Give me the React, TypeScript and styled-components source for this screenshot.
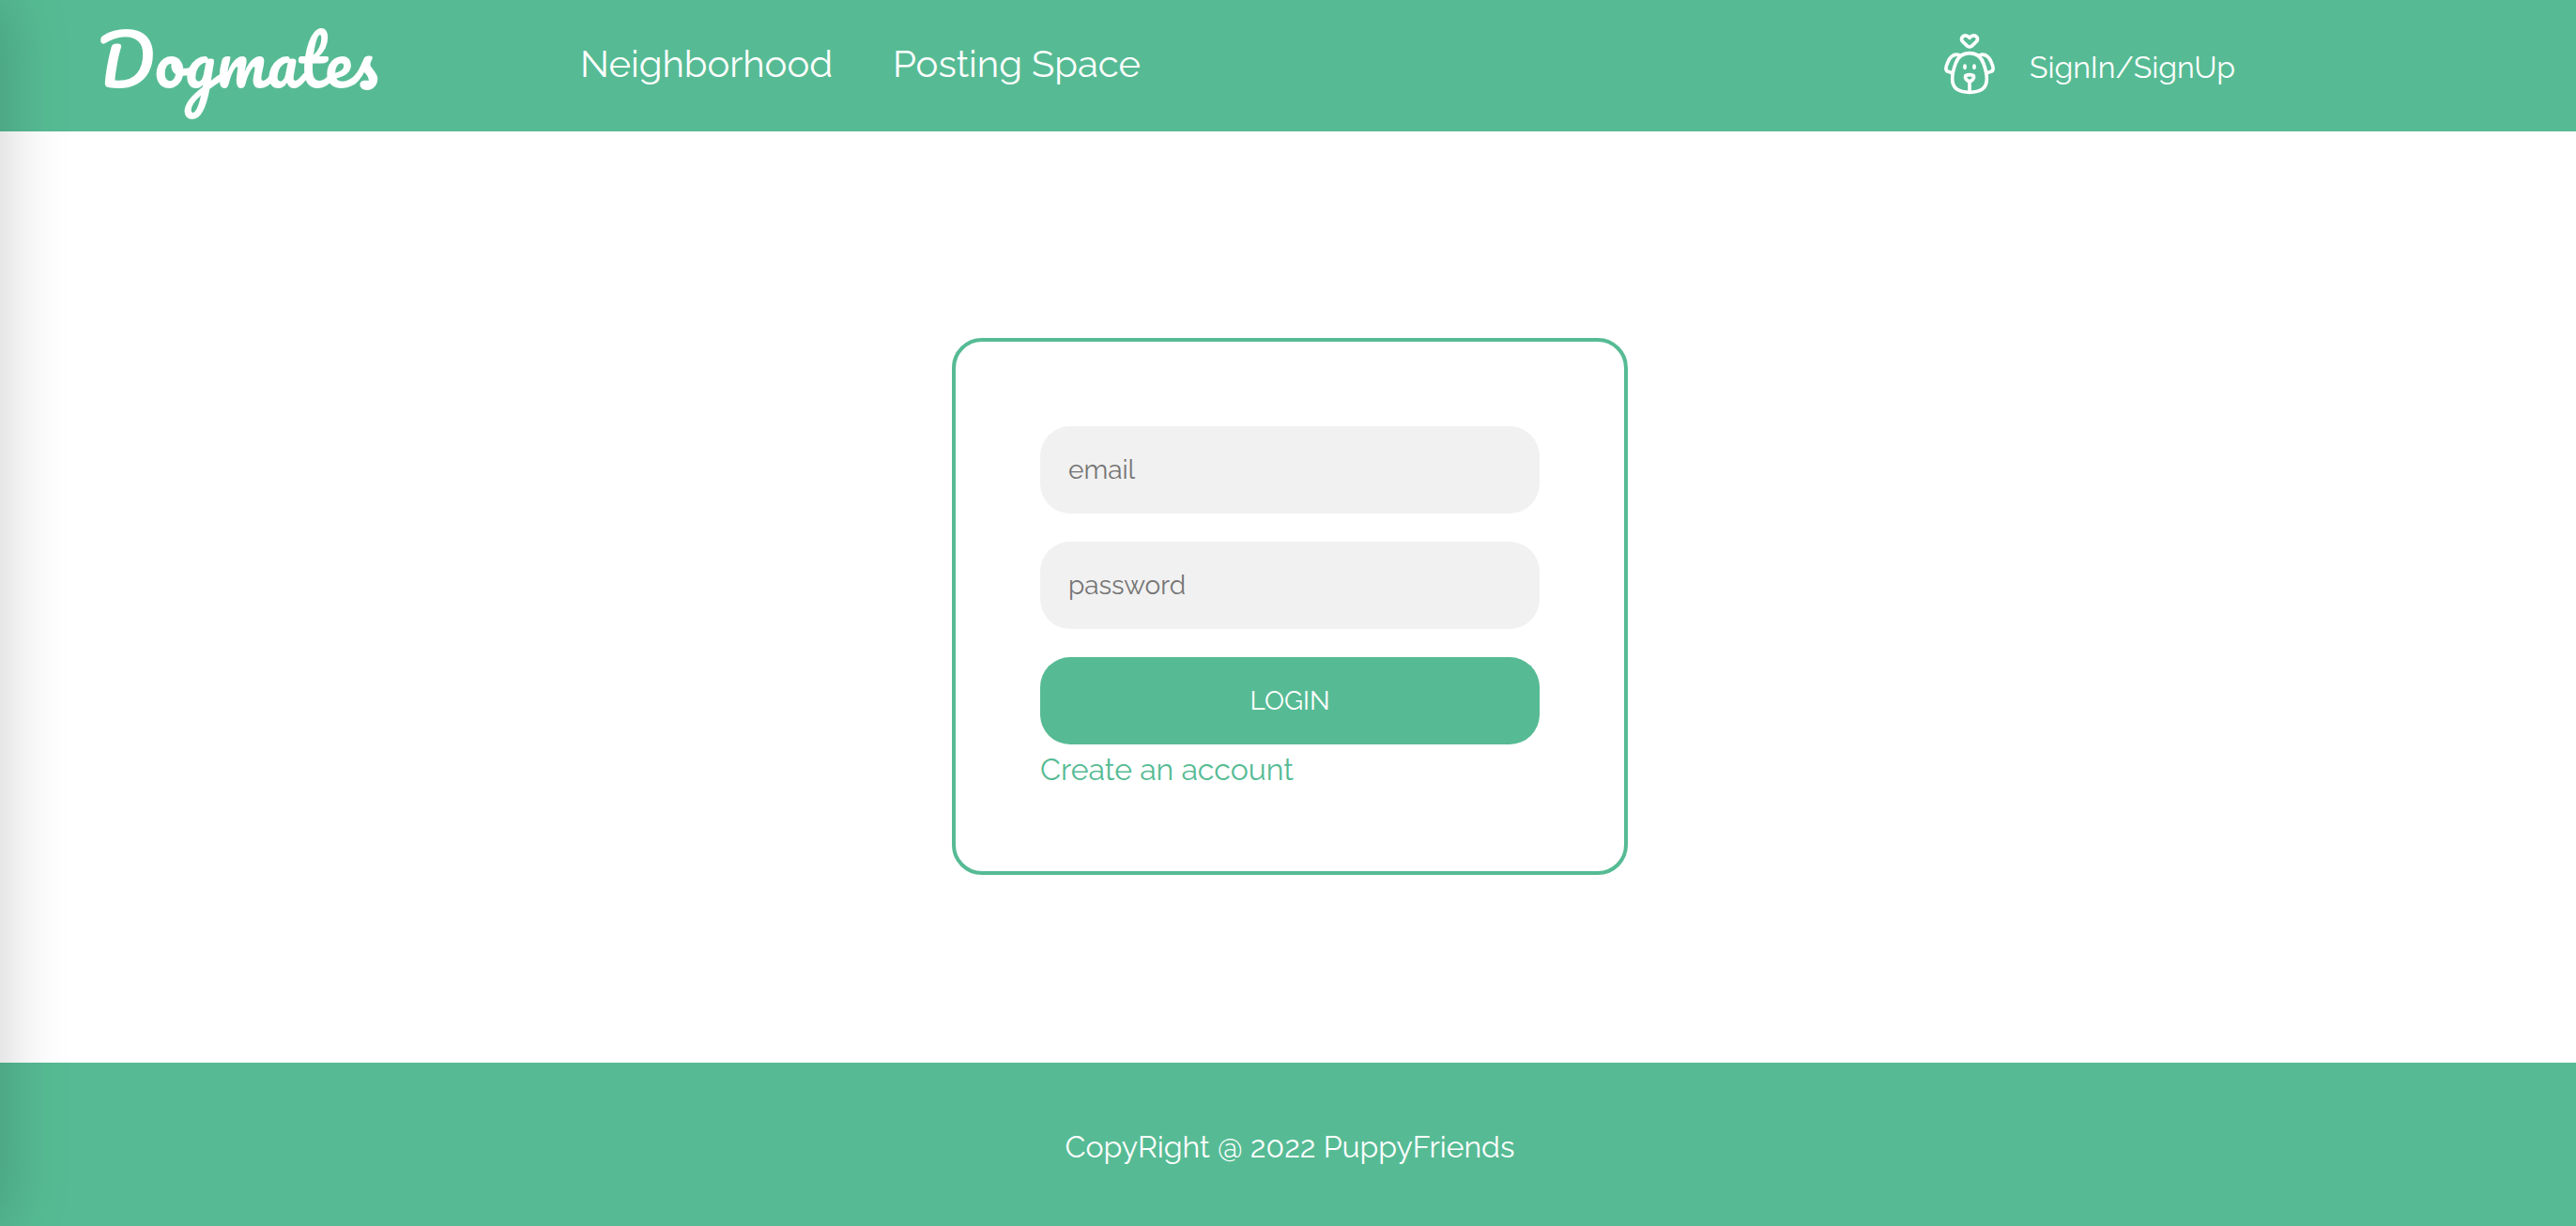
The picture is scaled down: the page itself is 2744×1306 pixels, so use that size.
import React from "react";
import styled, { createGlobalStyle } from "styled-components";

const green = "#56bb94";

const GlobalStyle = createGlobalStyle`
  * { box-sizing: border-box; }
  body {
    margin: 0;
    background: #fff;
    font-family: Raleway, Lato, "Liberation Sans", sans-serif;
    font-size: 32px;
    line-height: 44px;
  }
`;

const Page = styled.div`
  display: flex;
  flex-direction: column;
  min-height: 100vh;
`;

const Drawer = styled.aside`
  position: fixed;
  top: 0;
  right: 100%;
  width: 400px;
  height: 100%;
  box-shadow: 0 0 70px rgba(0, 0, 0, 0.2);
`;

const Header = styled.header`
  display: grid;
  grid-template-columns: 514px 1fr 674px;
  align-items: center;
  height: 140px;
  padding-left: 104px;
  padding-bottom: 4px;
  background: ${green};
`;

const Logo = styled.a`
  justify-self: start;
  padding-bottom: 8px;
  color: #fff;
  font-family: Pacifico, Lato, cursive;
  font-size: 72px;
  font-weight: 400;
  line-height: 124px;
  text-decoration: none;
`;

const Nav = styled.nav`
  display: flex;
  gap: 64px;
`;

const NavLink = styled.a`
  color: #fff;
  font-size: 40px;
  line-height: 48px;
  text-decoration: none;
`;

const Account = styled.a`
  display: flex;
  align-items: center;
  gap: 36px;
  color: #fff;
  text-decoration: none;
`;

const AccountLabel = styled.span`
  padding-top: 8px;
`;

const Main = styled.main`
  display: flex;
  flex: 1;
  justify-content: center;
  align-items: center;
  padding-top: 20px;
  padding-left: 4px;
`;

const Card = styled.form`
  display: flex;
  flex-direction: column;
  width: 720px;
  padding: 90px;
  border: 4px solid ${green};
  border-radius: 32px;
`;

const Field = styled.input`
  height: 93px;
  margin-bottom: 30px;
  padding: 0 30px;
  border: 0;
  border-radius: 32px;
  background: #f1f1f1;
  color: #333;
  font: inherit;
  font-size: 28px;
  &::placeholder { color: #757575; }
`;

const Submit = styled.button`
  height: 93px;
  border: 0;
  border-radius: 32px;
  background: ${green};
  color: #fff;
  font: inherit;
  font-size: 28px;
  text-transform: uppercase;
`;

const CreateLink = styled.a`
  align-self: flex-start;
  padding-top: 8px;
  color: ${green};
  line-height: 37px;
  text-decoration: none;
`;

const Footer = styled.footer`
  display: flex;
  justify-content: center;
  align-items: center;
  height: 174px;
  padding-top: 6px;
  padding-left: 4px;
  background: ${green};
  color: #fff;
`;

const DogIcon = () => (
  <svg width="56" height="66" viewBox="30 33 168 198" fill="none" stroke="#fff" strokeWidth="11" strokeLinecap="round" strokeLinejoin="round" aria-hidden="true">
    <path d="M114 49C107 39 96 40 91 46C87 52 88 58 93 62L108 76Q114 80 120 76L135 62C140 58 141 52 137 46C132 40 121 39 114 49Z" />
    <path d="M114 98C92 98 77 109 69 132C62 151 59 165 59 181C59 209 79 223 114 223S169 209 169 181C169 165 166 151 159 132C151 109 136 98 114 98Z" />
    <path d="M82 104C64 99 51 111 44 128C36 145 37 154 46 157L59 161" />
    <path d="M146 104C164 99 177 111 184 128C192 145 191 154 182 157L169 161" />
    <path d="M101 170Q114 164 127 170C130 177 123 187 114 188C105 187 98 177 101 170ZM114 188V222" />
    <path d="M99 138V145M129 138V145" />
  </svg>
);

export default function App() {
  return (
    <Page>
      <GlobalStyle />
      <Header>
        <Logo href="#">Dogmates</Logo>
        <Nav>
          <NavLink href="#neighborhood">Neighborhood</NavLink>
          <NavLink href="#posting">Posting Space</NavLink>
        </Nav>
        <Account href="#signin">
          <DogIcon />
          <AccountLabel>SignIn/SignUp</AccountLabel>
        </Account>
      </Header>
      <Main>
        <Card>
          <Field type="email" placeholder="email" aria-label="email" />
          <Field type="password" placeholder="password" aria-label="password" />
          <Submit type="button">Login</Submit>
          <CreateLink href="#create">Create an account</CreateLink>
        </Card>
      </Main>
      <Footer>CopyRight @ 2022 PuppyFriends</Footer>
      <Drawer />
    </Page>
  );
}
